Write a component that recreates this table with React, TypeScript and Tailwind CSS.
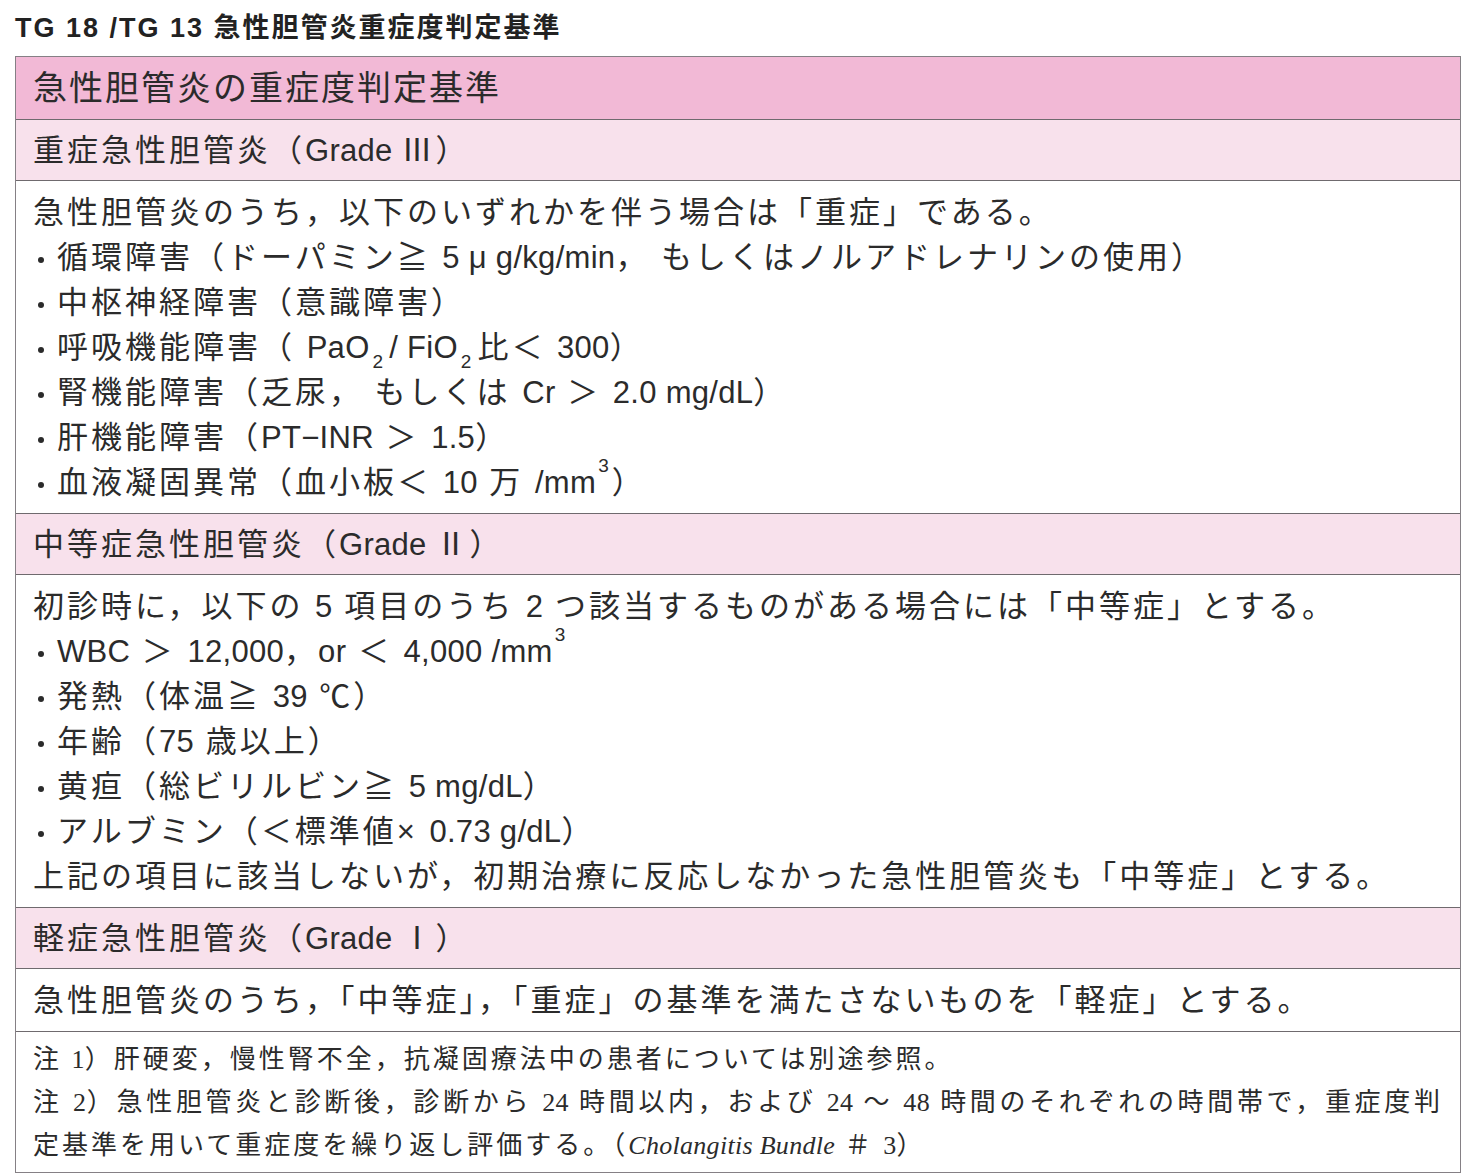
import React from 'react';

const sans = { fontFamily: '"Liberation Sans", "Noto Sans CJK JP", sans-serif' };
const serif = { fontFamily: '"Liberation Serif", "Noto Sans CJK JP", serif' };
const cjk = { fontFamily: '"Noto Sans CJK JP", sans-serif' };

const HeadRow: React.FC<{ children: React.ReactNode }> = ({ children }) => (
  <div className="h-[61px] flex items-center px-[17px] bg-[#f8e1ec] border-b border-[#6f6a6e] text-[31px] tracking-[3px] text-[#2b2b2b]">
    <div>{children}</div>
  </div>
);

const Body: React.FC<{ children: React.ReactNode }> = ({ children }) => (
  <div className="px-[17px] pt-[9px] pb-[8px] border-b border-[#6f6a6e] text-[31px] leading-[45px] tracking-[3px] text-[#2b2b2b]">
    {children}
  </div>
);

// latin run: no extra spacing
const L: React.FC<{ children: React.ReactNode }> = ({ children }) => (
  <span className="tracking-[0.3px]">{children}</span>
);

const Li: React.FC<{ children: React.ReactNode }> = ({ children }) => (
  <div>
    <span className="inline-block w-[24px]">
      <span className="inline-block w-[6px] h-[6px] rounded-full bg-[#2b2b2b] ml-[5px] align-middle" />
    </span>
    {children}
  </div>
);

const Sup: React.FC<{ children: React.ReactNode }> = ({ children }) => (
  <sup className="text-[19px] align-[0.6em] leading-none ml-[2px]">{children}</sup>
);

const Sub: React.FC<{ children: React.ReactNode }> = ({ children }) => (
  <sub className="text-[19px] align-[-0.25em] leading-none mx-[3px]">{children}</sub>
);

export default function App() {
  return (
    <div className="w-[1476px] h-[1174px] bg-white px-[15px] pt-[11px]" style={sans}>
      <div className="text-[27px] font-bold leading-[34px] text-[#222] tracking-[2px] mb-[11px]">
        TG 18 /TG 13 急性胆管炎重症度判定基準
      </div>
      <div className="w-[1446px] border border-[#858085]">
        <div className="h-[63px] flex items-center px-[17px] bg-[#f2b9d6] border-b border-[#6f6a6e] text-[34px] tracking-[2px] text-[#2b2b2b]">
          急性胆管炎の重症度判定基準
        </div>
        <HeadRow>重症急性胆管炎（<L>Grade </L><span style={cjk}>Ⅲ</span>）</HeadRow>
        <Body>
          <div>急性胆管炎のうち，以下のいずれかを伴う場合は「重症」である。</div>
          <Li>循環障害（ドーパミン≧ <L>5 μ g/kg/min</L>，&nbsp;もしくはノルアドレナリンの使用）</Li>
          <Li>中枢神経障害（意識障害）</Li>
          <Li>呼吸機能障害（ <L>PaO</L><Sub>2</Sub><L>/ FiO</L><Sub>2</Sub>比＜ <L>300</L>）</Li>
          <Li>腎機能障害（乏尿，&nbsp;もしくは <L>Cr</L> ＞ <L>2.0 mg/dL</L>）</Li>
          <Li>肝機能障害（<L>PT−INR</L> ＞ <L>1.5</L>）</Li>
          <Li>血液凝固異常（血小板＜ <L>10</L> 万 <L>/mm</L><Sup>3</Sup>）</Li>
        </Body>
        <HeadRow>中等症急性胆管炎（<L>Grade </L><span style={cjk}>Ⅱ</span>）</HeadRow>
        <Body>
          <div>初診時に，以下の <L>5</L> 項目のうち <L>2</L> つ該当するものがある場合には「中等症」とする。</div>
          <Li><L>WBC</L> ＞ <L>12,000</L>，<L>or</L> ＜ <L>4,000 /mm</L><Sup>3</Sup></Li>
          <Li>発熱（体温≧ <L>39</L> ℃）</Li>
          <Li>年齢（<L>75</L> 歳以上）</Li>
          <Li>黄疸（総ビリルビン≧ <L>5 mg/dL</L>）</Li>
          <Li>アルブミン（＜標準値× <L>0.73 g/dL</L>）</Li>
          <div>上記の項目に該当しないが，初期治療に反応しなかった急性胆管炎も「中等症」とする。</div>
        </Body>
        <HeadRow>軽症急性胆管炎（<L>Grade </L><span style={cjk}>Ⅰ</span>）</HeadRow>
        <Body>
          <div>急性胆管炎のうち，「中等症」，「重症」の基準を満たさないものを「軽症」とする。</div>
        </Body>
        <div className="px-[17px] pt-[6px] pb-[5px] text-[26px] leading-[43px] text-[#2b2b2b] tracking-[3px]" style={serif}>
          <div>注 <L>1</L>）肝硬変，慢性腎不全，抗凝固療法中の患者については別途参照。</div>
          <div className="[text-align-last:justify]">注 <L>2</L>）急性胆管炎と診断後，診断から <L>24</L> 時間以内，および <L>24</L> 〜 <L>48</L> 時間のそれぞれの時間帯で，重症度判</div>
          <div>定基準を用いて重症度を繰り返し評価する。（<i className="tracking-[0.3px]">Cholangitis Bundle</i> ＃ <L>3</L>）</div>
        </div>
      </div>
    </div>
  );
}
